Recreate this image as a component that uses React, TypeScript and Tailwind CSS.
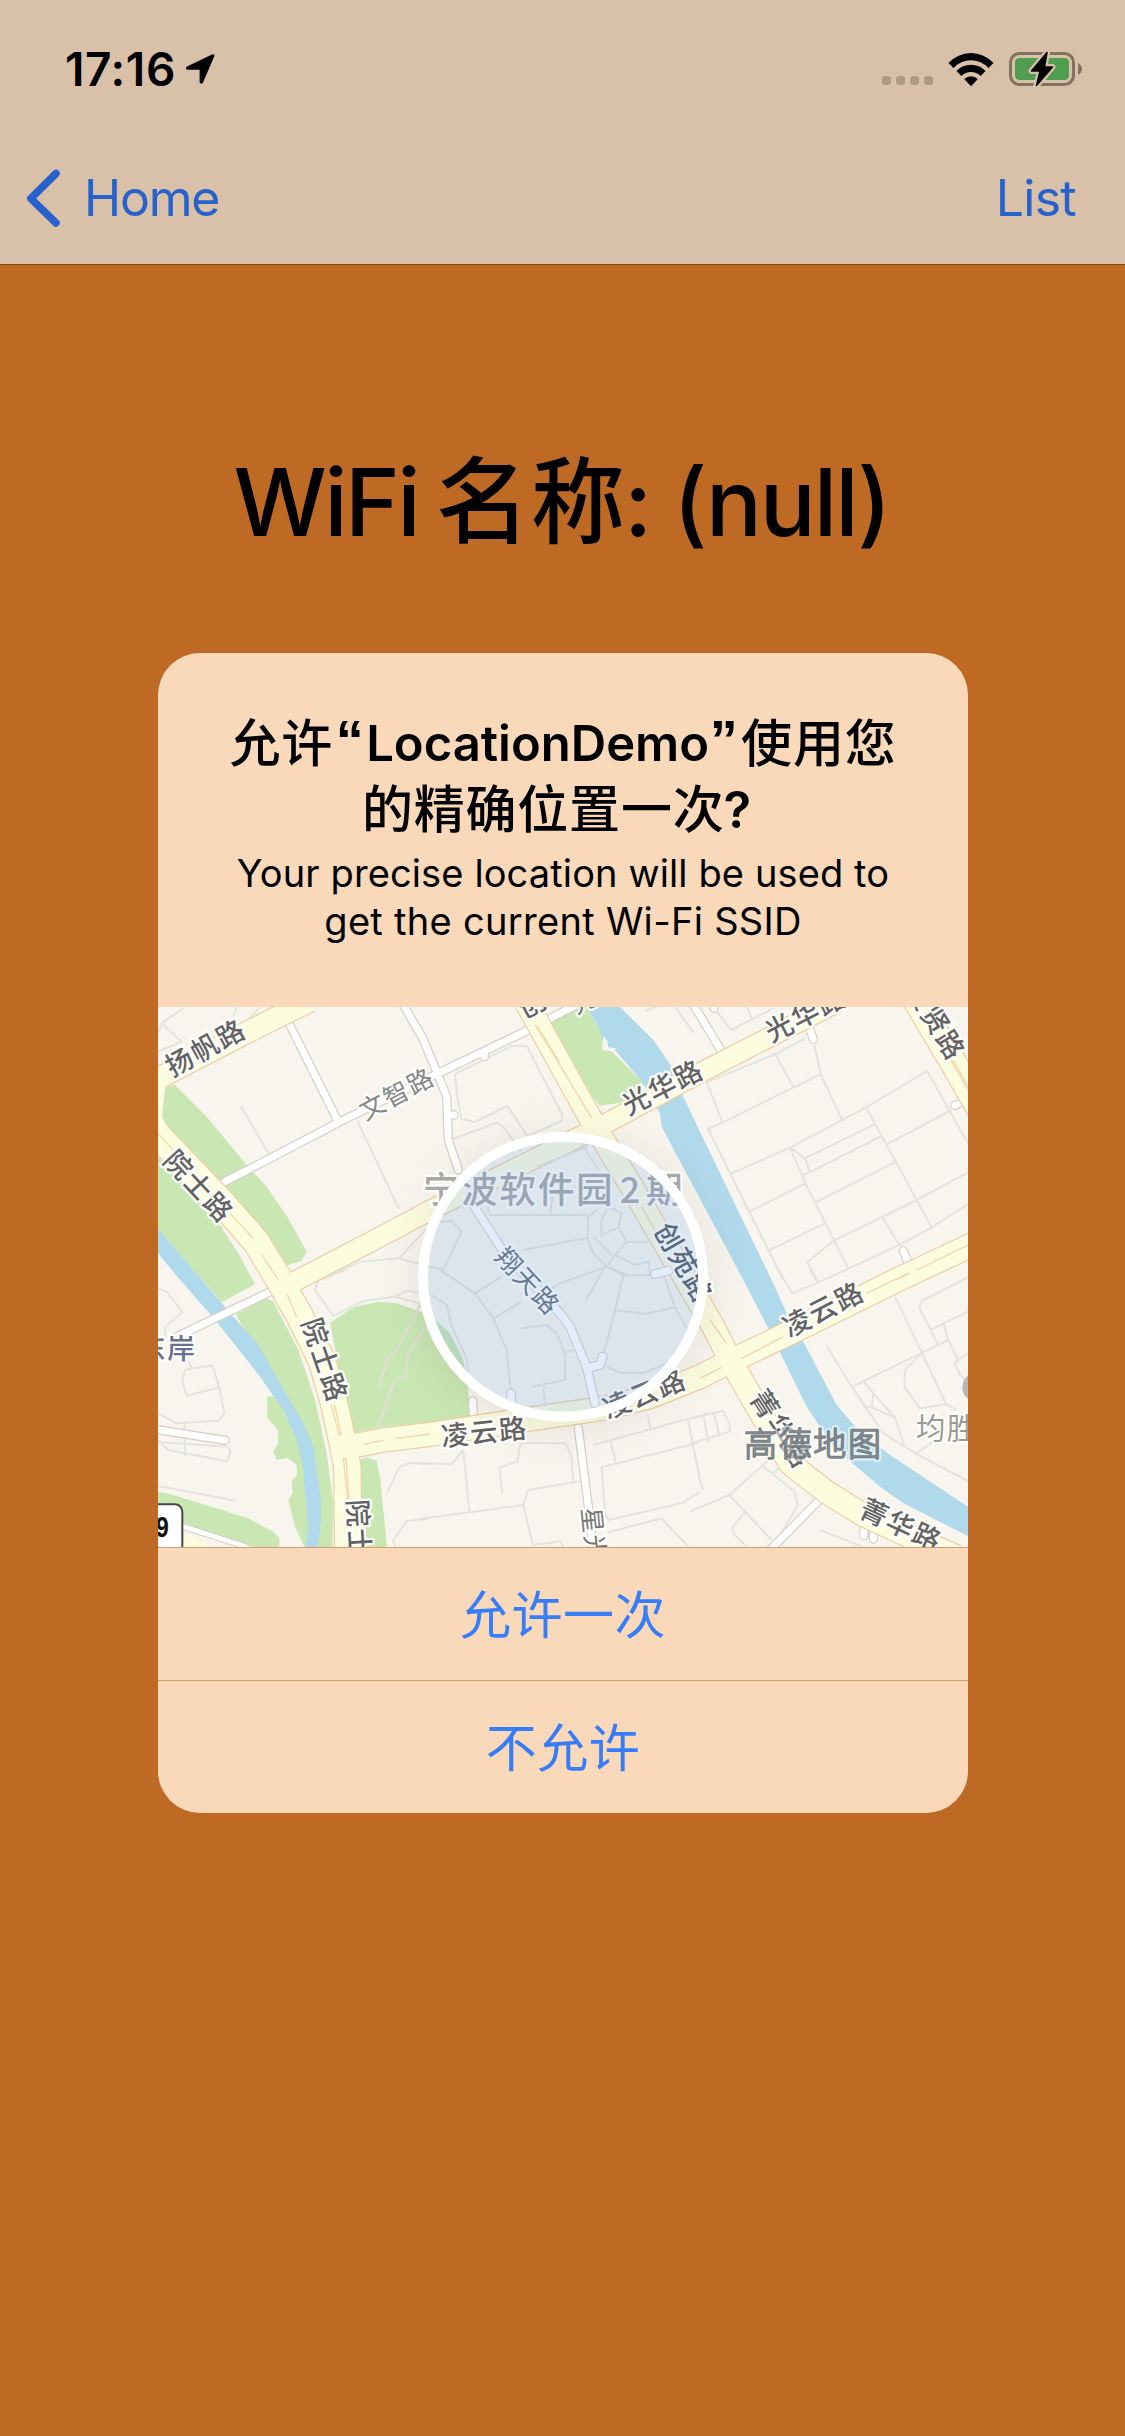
import React from "react";

const THIN_LINES = [
  "24,100 35,70 100,24",
  "35,70 95,125 24,155",
  "250,50 260,21",
  "275,80 330,21",
  "272,318 357,462",
  "622,362 747,627",
  "520,836 630,785 747,775 835,680",
  "747,775 810,792",
  "915,222 1085,138 1130,138 1237,345 1235,363 1130,410",
  "915,222 922,290 935,358 975,366 1072,318 1130,405",
  "910,417 1040,368 1065,385 1112,455",
  "1487,33 1525,17",
  "1575,21 1630,97",
  "1690,21 1744,90 1870,25",
  "1790,21 1808,58",
  "1670,247 1880,160 1965,115",
  "1670,247 1718,368",
  "1875,160 1930,262",
  "1993,135 2012,222 2075,357",
  "2012,222 1718,368 1674,387 1900,840",
  "1738,523 1920,443 2148,322 2331,213 2454,430",
  "1920,443 1965,475 2173,373",
  "1965,475 1981,517",
  "1960,526 2195,408",
  "1798,635 1965,551",
  "1920,443 1967,552 2096,808",
  "1995,608 2238,485",
  "1856,752 2024,670",
  "2148,322 2345,682",
  "2211,433 2405,330",
  "2454,517 2300,600 2197,651 2052,721 1972,786 2000,840",
  "2197,651 2248,735",
  "2030,836 2248,735 2345,682 2454,612",
  "24,865 50,875 97,935 46,980 45,1010",
  "115,1085 125,1105 188,1097 208,1162 110,1187 97,1145 105,1110 125,1105",
  "208,1162 223,1240 207,1262 80,1270 24,1240",
  "103,1270 106,1368",
  "24,1322 55,1350 232,1384 242,1355 234,1340 24,1326",
  "24,1458 258,1502",
  "550,948 495,870 503,843 590,808",
  "550,948 640,903 735,890 815,911",
  "735,890 772,872 805,878",
  "712,1478 747,1403 778,1389 840,1391",
  "810,1390 905,1392 940,1350",
  "840,1555 770,1564 729,1622 735,1641",
  "940,1350 958,1535",
  "810,1557 1120,1515 1150,1641",
  "1120,1515 1134,1470 1290,1444",
  "1057,1482 1048,1403 1102,1385 1112,1328 1247,1330 1265,1370 1269,1446",
  "1150,1635 1232,1624 1240,1641",
  "1330,1335 1675,1240 1620,1255",
  "1382,1325 1398,1385",
  "1494,1245 1502,1290",
  "1355,1402 1640,1330",
  "1355,1402 1365,1540 1375,1560 1595,1510 1650,1475",
  "1375,1597 1535,1555 1615,1641",
  "1614,1260 1650,1440 1660,1470",
  "1660,1245 1675,1325",
  "1690,1235 1710,1310",
  "1620,1258 1720,1232 1740,1275 1738,1295 1620,1332",
  "1620,1535 1738,1485 1837,1397 1893,1345",
  "1837,1397 1935,1475 1943,1516 1870,1641",
  "1738,1485 1865,1620",
  "1785,1538 1749,1580 1750,1602 1785,1635",
  "1870,1420 1905,1385",
  "1885,810 1927,880 2045,830",
  "1980,810 2005,850",
  "2454,832 2315,903 2308,923 2363,1032",
  "2343,988 2454,935",
  "2106,1160 2395,1020 2380,970",
  "2395,1020 2423,1080 2413,1090 2430,1125 2454,1145",
  "2413,1090 2454,1058",
  "2235,890 2390,1215",
  "2028,1034 2105,1160 2200,1300 2300,1362 2454,1443",
  "2320,1055 2265,1110 2263,1160 2310,1225 2390,1213 2420,1230",
  "2140,1142 2170,1180 2235,1253 2262,1335",
  "2170,1180 2165,1222 2140,1222",
  "2165,1222 2235,1253",
  "2297,1362 2350,1325",
  "2010,1590 2140,1641",
];

const CIRCLE_LINES = [
  "1013,620 1020,645 1312,645",
  "1200,645 1207,590",
  "1120,750 1312,713",
  "1312,713 1315,650 1340,630",
  "1312,713 1330,760 1370,800 1440,828",
  "1355,710 1354,660 1370,628",
  "1385,765 1330,710",
  "1430,725 1490,725",
  "1405,682 1430,725 1395,765 1370,800",
  "1380,622 1415,640 1405,682 1355,705",
  "1370,800 1230,850 1180,880",
  "1395,765 1455,795 1495,785 1500,820",
  "870,665 905,662 935,695 880,808 835,800",
  "870,810 975,880 1030,955 1070,1050 1083,1180",
  "975,880 1055,830",
  "1030,955 1115,905",
  "845,885 890,915 905,980 950,1075 960,1190",
  "1113,985 1190,975 1220,1000 1243,1058 1246,1140 1145,1160",
  "1180,1158 1185,1220",
  "1243,1058 1270,1050",
  "1308,900 1360,810",
  "1370,800 1420,826 1520,826",
  "1420,826 1395,930 1363,1055",
  "1395,930 1490,942 1575,921",
  "1370,1100 1410,1118 1485,1118 1560,1085",
  "1540,820 1575,921 1610,985",
  "1295,430 1345,510",
  "1160,500 1315,440",
];

const YELLOW_ROADS = [
  { d: "M0 248L260 113L345 70L480 3", w: 66 },
  { d: "M-10 372L215 607L318 725L385 835L450 950L515 1080L550 1200L572 1300L592 1400L595 1660", w: 82 },
  { d: "M400 862L730 690L840 631L1340 385L1655 216L1850 116L2060 8", w: 60 },
  { d: "M1125 0L1338 385L1445 560L1594 815L1690 980L1742 1083L1850 1270L1920 1390L1970 1430L2035 1480L2140 1545L2270 1605L2420 1670", w: 70 },
  { d: "M590 1342L700 1320L840 1303L1120 1260L1360 1225L1500 1190L1650 1130L1742 1083L1900 1008L2250 836L2480 728", w: 72 },
  { d: "M2295 -5L2405 180L2500 345", w: 80 },
];

const MEDIANS = [
  "M24 400L80 460M240 640L310 715M335 765L385 840",
  "M410 880L440 950",
  "M543 1212L568 1305L573 1303L553 1212",
  "M580 1375L593 1500L597 1500L588 1375Z",
  "M1155 75L1215 170L1325 355",
  "M1160 75L1230 190",
  "M2403 180L2454 270M2410 180L2454 260",
  "M2300 810L2454 735M2240 838L2280 820",
  "M1775 1075L1900 1010M1650 1135L1715 1102",
  "M2150 880L2270 822",
  "M640 1333L700 1321M740 1315L840 1302",
  "M1680 960L1730 1030",
  "M1475 620L1520 700",
];

const WHITE_ROADS = [
  "M225 545L370 470L565 368L860 222L1135 90",
  "M1200 55L1300 5",
  "M418 72L565 366",
  "M755 5L818 115L860 215L890 290L895 420L925 510",
  "M895 345L912 345",
  "M1003 155L1003 170",
  "M1625 5L1715 155",
  "M1975 75L1990 118",
  "M2415 316L2425 312",
  "M2260 752L2275 790",
  "M85 1008L365 873",
  "M10 1287L225 1321",
  "M968 1203L970 1250",
  "M1285 1285L1315 1520L1330 1660",
  "M2010 1498L1855 1655",
  "M2142 1590L2142 1607M2170 1598L2170 1617",
  "M1690 12L1692 25",
];

const DISC_ROADS = [
  "M970 615L1060 755L1230 940L1260 980L1310 1100L1335 1210",
  "M1310 1104L1350 1095L1358 1070",
  "M1083 1180L1084 1220",
  "M1515 822L1555 812",
];

type LabelProps = {
  x: number;
  y: number;
  r?: number;
  s?: number;
  gap?: number;
  fill?: string;
  weight?: number;
  t: string;
};

function Label({ x, y, r = 0, s = 82, gap = 5, fill = "#636363", weight = 500, t }: LabelProps) {
  return (
    <text
      transform={`translate(${x} ${y}) rotate(${r})`}
      x={gap / 2}
      y={s * 0.37}
      textAnchor="middle"
      fontSize={s}
      letterSpacing={gap}
      fontWeight={weight}
      fill={fill}
      stroke="#fffffff0"
      strokeWidth={14}
      strokeLinejoin="round"
      paintOrder="stroke"
      fontFamily='"Noto Sans CJK SC", sans-serif'
    >
      {t}
    </text>
  );
}

function LocationMap() {
  return (
    <svg viewBox="24 21 2430 1620" className="block h-[540px] w-[810px]" fill="none">
      <defs>
        <radialGradient id="halo" cx="1239" cy="848" r="560" gradientUnits="userSpaceOnUse">
          <stop offset="0.72" stopColor="#000" stopOpacity="0.06" />
          <stop offset="0.86" stopColor="#000" stopOpacity="0.02" />
          <stop offset="1" stopColor="#000" stopOpacity="0" />
        </radialGradient>
        <clipPath id="disc">
          <circle cx="1239" cy="830" r="415" />
        </clipPath>
      </defs>
      <rect x="24" y="21" width="2430" height="1620" fill="#f8f5ee" />

      <g stroke="#e3e4de" strokeWidth="6" strokeLinejoin="round">
        {THIN_LINES.map((p, i) => (
          <polyline key={i} points={p} />
        ))}
      </g>

      <g fill="#c9e7b3">
        <path d="M24 470L210 675L265 760L315 853L215 907L130 810L24 685Z" />
        <path d="M40 265L75 255L170 350L290 495L350 560L415 655L470 755L455 783L405 797L350 710L215 545L32 355Z" />
        <path d="M258 942L350 895L370 905L445 1050L495 1200L530 1360L550 1510L547 1650L495 1650L480 1350L400 1170L275 975Z" />
        <path d="M352 1188L352 1255L384 1290L385 1330L370 1355L380 1380L413 1373L440 1395L441 1425L425 1445L428 1480L415 1500L435 1580L465 1645L490 1640L480 1400L380 1190Z" />
        <path d="M24 1475L60 1482L290 1553L370 1595L388 1615L388 1650L330 1650L100 1570L24 1548Z" />
        <path d="M540 968L610 922L685 905L740 910L840 945L900 1000L940 1080L955 1160L957 1255L810 1270L690 1282L615 1298L575 1150Z" />
        <path d="M630 1380L650 1372L680 1382L690 1430L712 1650L635 1650Z" />
        <path d="M1200 70L1285 15L1310 21L1355 100L1380 150L1487 255L1430 305L1350 317L1335 300Z" />
      </g>
      <g stroke="#e1ddd7" strokeWidth="7">
        <path d="M687 1166L713 1075L742 1048L815 905" />
        <path d="M685 1284L733 1142L768 1125L773 1065L835 965" />
      </g>

      <g fill="#b0d9eb">
        <path d="M24 685L130 810L220 915L325 1035L405 1175L460 1270L490 1340L513 1500L513 1560L503 1650L465 1650L475 1580L470 1530L460 1410L440 1320L400 1230L330 1130L200 965L65 810L24 760Z" />
        <path d="M1410 21L1510 120L1565 200L1600 290L1650 395L1865 840L1910 940L1960 1025L2060 1215L2120 1285L2220 1365L2454 1520V1608L2260 1510L2190 1460L2050 1340L1970 1220L1855 985L1780 840L1620 540L1535 380L1530 340L1480 250L1395 150L1380 148L1360 130L1345 80L1310 21Z" />
      </g>
      <path d="M1360 108L1356 150L1390 155L1398 145L1375 142L1372 122Z" fill="#f4f7ee" />

      <g strokeLinejoin="round" strokeLinecap="round">
        <g stroke="#d5cec8" strokeWidth="28">
          {WHITE_ROADS.map((d) => (
            <path key={d} d={d} />
          ))}
        </g>
        <g stroke="#fff" strokeWidth="21">
          {WHITE_ROADS.map((d) => (
            <path key={d} d={d} />
          ))}
        </g>
      </g>

      <path d="M24 200L70 200L40 270L32 355L70 420L24 430Z" fill="#fcfcdf" />
      <path d="M40 270L32 355" stroke="#f0cba3" strokeWidth="4" />
      <g stroke="#f0cba3" strokeLinejoin="round">
        {YELLOW_ROADS.map(({ d, w }) => (
          <path key={d} d={d} strokeWidth={w + 4} />
        ))}
      </g>
      <g stroke="#fcfcdf" strokeLinejoin="round">
        {YELLOW_ROADS.map(({ d, w }) => (
          <path key={d} d={d} strokeWidth={w - 3} />
        ))}
      </g>
      <path d="M24 206L60 215L44 270L36 350L70 415L24 380Z" fill="#fcfcdf" />
      <g stroke="#f3d5ac" strokeWidth="4">
        {MEDIANS.map((d) => (
          <path key={d} d={d} />
        ))}
      </g>

      <path d="M24 1600L100 1622L160 1641" stroke="#fcfcdf" strokeWidth="40" />
      <path d="M95 1578L290 1641" stroke="#d5cec8" strokeWidth="20" />
      <path d="M95 1578L290 1641" stroke="#fff" strokeWidth="14" />

      <g clipPath="url(#disc)">
        <g stroke="#e2e4df" strokeWidth="6">
          {CIRCLE_LINES.map((p) => (
            <polyline key={p} points={p} />
          ))}
        </g>
        <g strokeLinejoin="round" strokeLinecap="round">
          <g stroke="#d5cec8" strokeWidth="29">
            {DISC_ROADS.map((d) => (
              <path key={d} d={d} />
            ))}
          </g>
          <g stroke="#fff" strokeWidth="23">
            {DISC_ROADS.map((d) => (
              <path key={d} d={d} />
            ))}
          </g>
        </g>
      </g>

      <path
        d="M679 848A560 560 0 1 0 1799 848A560 560 0 1 0 679 848ZM824 830A415 415 0 1 0 1654 830A415 415 0 1 0 824 830Z"
        fillRule="evenodd"
        fill="url(#halo)"
      />

      <g>
        <Label t="扬帆路" x={164} y={144} r={-29} />
        <Label t="文智路" x={738} y={282} r={-28} s={76} fill="#858585" weight={400} />
        <Label t="院士路" x={145} y={557} r={47} />
        <Label t="光华路" x={1536} y={262} r={-27} />
        <Label t="光华路" x={1965} y={43} r={-27} />
        <Label t="创" x={1145} y={12} r={-28} />
        <Label t="光" x={1300} y={2} r={-28} s={74} fill="#757575" weight={400} />
        <Label t="聚贤路" x={2355} y={60} r={58} />
        <Label t="院士路" x={524} y={1078} r={71} />
        <Label t="院士路" x={629} y={1626} r={87} />
        <Label t="凌云路" x={1001} y={1296} r={-6} />
        <Label t="凌云路" x={1481} y={1182} r={-22} />
        <Label t="凌云路" x={2018} y={928} r={-27} />
        <Label t="菁华路" x={1892} y={1285} r={57} />
        <Label t="菁华路" x={2251} y={1574} r={25} />
        <Label t="创苑路" x={1600} y={786} r={60} fill="#565c64" />
        <Label t="翔天路" x={1132} y={842} r={47} s={76} fill="#666e78" weight={400} />
        <Label t="星光路" x={1336} y={1641} r={84} s={76} fill="#757575" weight={400} />
        <Label t="东岸" x={49} y={1045} s={84} gap={4} fill="#69718f" />
        <Label t="均胜" x={2388} y={1285} s={88} gap={4} fill="#9b9b96" weight={400} />
        <Label t="宁波软件园" x={1103} y={569} s={110} gap={5} fill="#a8a8a5" />
        <Label t="2" x={1440} y={569} s={108} fill="#a8a8a5" />
        <Label t="期" x={1543} y={569} s={110} fill="#a8a8a5" />
        <circle cx="2482" cy="1162" r="45" fill="#b7b7b3" />
      </g>

      <g
        fontFamily='"Noto Sans CJK SC", sans-serif'
        fontSize="99"
        fontWeight="300"
        letterSpacing="5"
        textAnchor="middle"
        strokeLinejoin="round"
      >
        <text x="1990" y="1369" stroke="#ffffff90" strokeWidth="18">高德地图</text>
        <text x="1990" y="1369" stroke="#4c565b" strokeOpacity="0.75" strokeWidth="5">高德地图</text>
        <text x="1990" y="1369" fill="#858c8e" fillOpacity="0.8">高德地图</text>
      </g>

      <rect x="-60" y="1513" width="157" height="180" rx="22" fill="#fff" stroke="#484848" strokeWidth="6" />
      <text
        transform="translate(37 1612) scale(.8 1)"
        textAnchor="middle"
        fontSize="88"
        fontWeight="700"
        fill="#111"
        fontFamily='"Liberation Sans", sans-serif'
      >
        9
      </text>

      <circle cx="1239" cy="830" r="410" fill="#6ea0e6" fillOpacity="0.2" />
      <circle cx="1239" cy="830" r="420" stroke="#fff" strokeWidth="30" />
    </svg>
  );
}

function StatusBar() {
  return (
    <div className="flex h-[132px] items-start justify-between pr-[42px] pl-[65px]">
      <div className="flex items-center gap-[9px] pt-[43px]">
        <span className="text-[46px] leading-[52px] font-semibold tracking-[0.6px] text-black">17:16</span>
        <svg viewBox="0 0 30 32" className="h-[32px] w-[30px]">
          <path d="M2 13.400 27 1.400Q30 .3 29.200 3.600L18 29.500Q16.200 32 14.600 29.300V16.800H3Q-.8 16.200 2 13.400Z" fill="#000" />
        </svg>
      </div>
      <div className="flex items-end pt-[50px]">
        <div className="mr-[14px] mb-[3px] flex gap-[5px]">
          <i className="h-[9px] w-[9px] rounded-[3px] bg-[#ae9a86]" />
          <i className="h-[9px] w-[9px] rounded-[3px] bg-[#ae9a86]" />
          <i className="h-[9px] w-[9px] rounded-[3px] bg-[#ae9a86]" />
          <i className="h-[9px] w-[9px] rounded-[3px] bg-[#ae9a86]" />
        </div>
        <svg viewBox="0 0 48 36" className="mr-[14px] mb-[1px] h-[36px] w-[48px]">
          <path d="M1.500 12A30.500 30.500 0 0 1 46.500 12L41.500 17A23.700 23.700 0 0 0 6.500 17Z" fill="#000" />
          <path d="M9.500 20A19.900 19.900 0 0 1 38.500 20L33.600 25A13.300 13.300 0 0 0 14.400 25Z" fill="#000" />
          <path d="M17.200 28A9.800 9.800 0 0 1 30.800 28L24 35.200Z" fill="#000" />
        </svg>
        <svg viewBox="0 0 74 38" className="h-[38px] w-[74px]">
          <rect x="1.500" y="3.500" width="63" height="31" rx="9" fill="none" stroke="#82725f" strokeWidth="3" />
          <rect x="6" y="8" width="54" height="22" rx="4.500" fill="#519d50" />
          <path d="M69 13Q73 15.500 73 19T69 25Z" fill="#82725f" />
          <path d="M38 2.500 22.500 21H31L27.500 35.500 43.500 17H35.500Z" fill="#d9c1a9" stroke="#d9c1a9" strokeWidth="6" strokeLinejoin="round" />
          <path d="M38 2.500 22.500 21H31L27.500 35.500 43.500 17H35.500Z" fill="#000" stroke="#000" strokeWidth="1.500" strokeLinejoin="round" />
        </svg>
      </div>
    </div>
  );
}

export default function App() {
  return (
    <div className='flex h-[2436px] w-[1125px] flex-col overflow-hidden bg-[#be6a24] font-["Inter","Noto_Sans_CJK_SC",sans-serif] text-black'>
      <header className="h-[265px] border-b border-[#7f4a20] bg-[#d9c1a9]">
        <StatusBar />
        <nav className="flex h-[132px] items-center justify-between pr-[49px] pl-[26px] text-[50px] text-[#2761cb]">
          <button className="flex items-center">
            <svg viewBox="0 0 34 58" className="mr-[24px] h-[58px] w-[34px]">
              <path d="M30 4.500 4.800 29.500 30 54" fill="none" stroke="currentColor" strokeWidth="7.500" strokeLinecap="round" strokeLinejoin="round" />
            </svg>
            <span className="tracking-[-1.2px]">Home</span>
          </button>
          <button className="tracking-[-0.7px]">List</button>
        </nav>
      </header>

      <h1 className="mt-[172px] flex h-[130px] items-center justify-center pr-[2px] text-[93px] leading-[130px] font-medium whitespace-pre">
        <span className="tracking-[-2.6px]">WiFi</span>
        <span className="ml-[18px] text-[94px] tracking-[1px]">名称</span>
        <span className="-ml-[2px] tracking-[-2px]">: (null)</span>
      </h1>

      <section className="mt-[86px] ml-[158px] flex h-[1160px] w-[810px] flex-col overflow-hidden rounded-[42px] bg-[#f9d9b9]">
        <div className="h-[354px] pt-[58px] text-center">
          <h2 className="text-[51px] leading-[66px] font-medium tracking-[0.8px] whitespace-nowrap">
            <span className="flex h-[66px] justify-center">
              <span>允许</span>
              <span className="mr-[1px] ml-[2px] w-[30px] font-['Liberation_Sans'] text-[56px] leading-[58px] font-bold">“</span>
              <span className="text-[49px] font-semibold tracking-[0px]">LocationDemo</span>
              <span className="mr-[2px] w-[30px] font-['Liberation_Sans'] text-[56px] leading-[58px] font-bold">”</span>
              <span>使用您</span>
            </span>
            <span className="flex h-[66px] justify-center pr-[12px]">
              <span>的精确位置一次</span>
              <span className="-ml-[1px] font-semibold">?</span>
            </span>
          </h2>
          <p className="mt-[6px] text-[38px] leading-[48px] tracking-[0.12px]">
            <span className="block">Your precise location will be used to</span>
            <span className="block tracking-[0.3px]">get the current Wi-Fi SSID</span>
          </p>
        </div>
        <LocationMap />
        <button className="h-[133px] border-t border-[#d79d6b] pt-[4px] text-[51px] tracking-[0.5px] text-[#377df7]">允许一次</button>
        <button className="h-[133px] border-t border-[#d79d6b] pt-[4px] text-[51px] tracking-[0.5px] text-[#377df7]">不允许</button>
      </section>
    </div>
  );
}
